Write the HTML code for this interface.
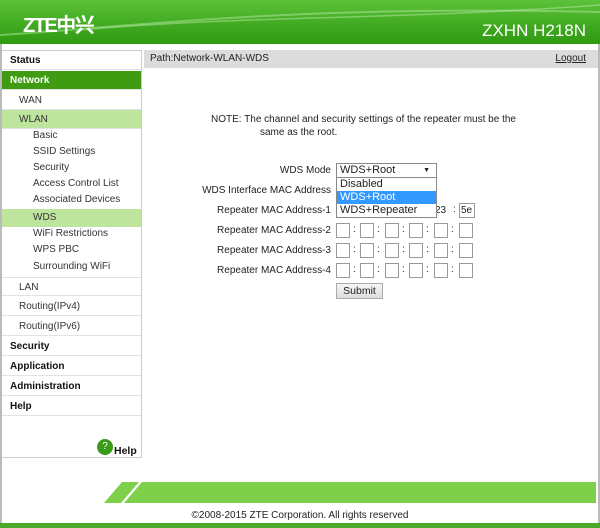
<!DOCTYPE html>
<html><head><meta charset="utf-8"><style>
*{margin:0;padding:0;box-sizing:border-box}
body{width:600px;height:528px;position:relative;background:#fff;font-family:"Liberation Sans",sans-serif;font-size:10px;color:#222;overflow:hidden}
.hdr{position:absolute;left:0;top:0;width:600px;height:44px;background:linear-gradient(180deg,#5cc23a 0%,#3fa81f 60%,#2f9a12 100%);overflow:hidden}
.logo{position:absolute;left:23px;top:9px;color:#fff;font-weight:bold;font-size:20px;letter-spacing:-1.5px;font-family:"Liberation Sans","Noto Sans CJK SC",sans-serif}
.model{position:absolute;right:14px;top:21px;color:#fff;font-size:17px}
.frame{position:absolute;left:0;top:44px;width:600px;height:480px;border-left:2px solid #bbb;border-right:2px solid #bbb}
.side{position:absolute;left:2px;top:50px;width:140px;height:408px;border:1px solid #ccc;border-left:none}
.it{position:absolute;left:0;width:139px;height:19px;line-height:19px;border-bottom:1px solid #e2e2e2;padding-left:8px}
.b{font-weight:bold;color:#111}
.s{padding-left:17px;color:#333}
.ss{padding-left:31px;color:#333;border:none;height:16px;line-height:16px}
.path{position:absolute;left:144px;top:50px;width:454px;height:18px;background:#dcdcdc;line-height:18px;padding-left:6px;color:#222}
.lo{position:absolute;right:12px;top:0;text-decoration:underline}
.lbl{position:absolute;right:269px;text-align:right;white-space:nowrap}
.box{position:absolute;width:14px;height:15px;border:1px solid #999;background:#fff}
.col{position:absolute;font-size:10px}
</style></head><body>
<div class="hdr">
<svg width="600" height="44" style="position:absolute;left:0;top:0"><path d="M0 35 C150 25 300 5 600 12" stroke="#9fe08a" stroke-width="2" fill="none" opacity=".6"/><path d="M80 30 C250 15 400 20 600 5" stroke="#b8eaa6" stroke-width="1.5" fill="none" opacity=".5"/></svg>
<div class="logo">ZTE中兴</div><div class="model">ZXHN H218N</div></div>
<div class="frame"></div>
<div class="side">
<div class="it b" style="top:0">Status</div>
<div class="it b" style="top:20px;background:#3f9c12;color:#fff">Network</div>
<div class="it s" style="top:40px">WAN</div>
<div class="it s" style="top:59px;background:#bde59d">WLAN</div>
<div class="it ss" style="top:77px">Basic</div>
<div class="it ss" style="top:93px">SSID Settings</div>
<div class="it ss" style="top:109px">Security</div>
<div class="it ss" style="top:125px">Access Control List</div>
<div class="it ss" style="top:141px">Associated Devices</div>
<div class="it ss" style="top:158px;height:18px;line-height:18px;background:#bde59d">WDS</div>
<div class="it ss" style="top:175px">WiFi Restrictions</div>
<div class="it ss" style="top:191px">WPS PBC</div>
<div class="it ss" style="top:208px">Surrounding WiFi</div>
<div class="it s" style="top:226px;border-top:1px solid #e2e2e2">LAN</div>
<div class="it s" style="top:246px">Routing(IPv4)</div>
<div class="it s" style="top:266px">Routing(IPv6)</div>
<div class="it b" style="top:286px">Security</div>
<div class="it b" style="top:306px">Application</div>
<div class="it b" style="top:326px">Administration</div>
<div class="it b" style="top:346px">Help</div>
<div style="position:absolute;left:95px;top:388px;width:16px;height:16px;border-radius:50%;background:#3a9a1a;color:#fff;font-size:10px;text-align:center;line-height:16px">?</div>
<div class="b" style="position:absolute;left:112px;top:394px;font-size:10.5px">Help</div>
</div>
<div class="path">Path:Network-WLAN-WDS<span class="lo">Logout</span></div>
<div style="position:absolute;left:211px;top:113px;line-height:13px;color:#222">NOTE: The channel and security settings of the repeater must be the<br><span style="padding-left:49px">same as the root.</span></div>
<div class="lbl" style="top:165px">WDS Mode</div>
<div class="lbl" style="top:185px">WDS Interface MAC Address</div>
<div class="lbl" style="top:205px">Repeater MAC Address-1</div>
<div class="lbl" style="top:225px">Repeater MAC Address-2</div>
<div class="lbl" style="top:245px">Repeater MAC Address-3</div>
<div class="lbl" style="top:265px">Repeater MAC Address-4</div>
<div class="box" style="left:434px;top:203px;width:20px;font-size:10px;line-height:13px;border-color:#fff">23</div>
<div class="col" style="left:453px;top:204px">:</div>
<div class="box" style="left:459px;top:203px;width:16px;font-size:10px;line-height:13px;padding-left:1px">5e</div>
<div id="rows"></div>
<script>
var h='';[223,243,263].forEach(function(y){[336,360,385,409,434,459].forEach(function(x,i){h+='<div class="box" style="left:'+x+'px;top:'+y+'px"></div>';if(i<5)h+='<div class="col" style="left:'+(x+17)+'px;top:'+(y+1)+'px">:</div>';});});document.getElementById('rows').innerHTML=h;
</script>
<div style="position:absolute;left:336px;top:163px;width:101px;height:15px;border:1px solid #888;background:#fff;line-height:13px;padding-left:3px;font-size:11px">WDS+Root<span style="position:absolute;right:6px;font-size:7px">▼</span></div>
<div style="position:absolute;left:336px;top:177px;width:101px;height:41px;border:1px solid #888;background:#fff;font-size:11px;line-height:13px">
<div style="padding-left:3px">Disabled</div>
<div style="padding-left:3px;background:#3399ff;color:#fff">WDS+Root</div>
<div style="padding-left:3px">WDS+Repeater</div></div>
<div style="position:absolute;left:336px;top:283px;width:47px;height:16px;border:1px solid #aaa;background:linear-gradient(#f6f6f6,#ddd);text-align:center;line-height:14px;font-size:10.5px">Submit</div>
<svg width="600" height="30" style="position:absolute;left:0;top:480px"><polygon points="122,2 139,2 121,23 104,23" fill="#7ed04a"/><polygon points="142,2 596,2 596,23 124,23" fill="#7ed04a"/></svg>
<div style="position:absolute;left:0;width:600px;top:510px;text-align:center;font-size:10px;color:#222">©2008-2015 ZTE Corporation. All rights reserved</div>
<div style="position:absolute;left:0;top:523px;width:600px;height:5px;background:#4aa82a"></div>
</body></html>
